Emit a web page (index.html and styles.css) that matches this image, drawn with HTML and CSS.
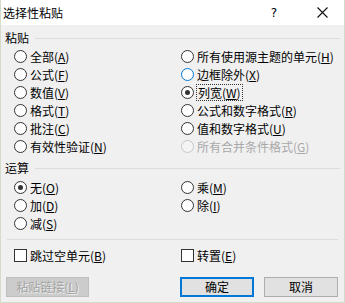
FILE: index.html
```html
<!DOCTYPE html>
<html lang="zh-CN">
<head>
    <meta charset="UTF-8">
    <title>选择性粘贴</title>
    <link rel="stylesheet" href="styles.css">
</head>
<body>
<div class="dialog">
    <div class="titlebar">
        <span class="title">选择性粘贴</span>
        <span class="help">?</span>
        <span class="close">
            <svg width="11" height="11" viewBox="0 0 11 11"><path d="M0.5 0.5 L10.5 10.5 M10.5 0.5 L0.5 10.5" stroke="#111" stroke-width="1.1" fill="none"/></svg>
        </span>
    </div>

    <div class="content">
        <div class="group-label">粘贴</div>
        <div class="options">
            <label class="opt"><span class="radio"></span>全部(<u>A</u>)</label>
            <label class="opt"><span class="radio"></span>所有使用源主题的单元(<u>H</u>)</label>
            <label class="opt"><span class="radio"></span>公式(<u>F</u>)</label>
            <label class="opt"><span class="radio hover"></span>边框除外(<u>X</u>)</label>
            <label class="opt"><span class="radio"></span>数值(<u>V</u>)</label>
            <label class="opt"><span class="radio checked"></span><span class="focus">列宽(<u>W</u>)</span></label>
            <label class="opt"><span class="radio"></span>格式(<u>T</u>)</label>
            <label class="opt"><span class="radio"></span>公式和数字格式(<u>R</u>)</label>
            <label class="opt"><span class="radio"></span>批注(<u>C</u>)</label>
            <label class="opt"><span class="radio"></span>值和数字格式(<u>U</u>)</label>
            <label class="opt"><span class="radio"></span>有效性验证(<u>N</u>)</label>
            <label class="opt disabled"><span class="radio"></span>所有合并条件格式(<u>G</u>)</label>
        </div>

        <div class="group-label second">运算</div>
        <div class="options ops">
            <label class="opt"><span class="radio checked"></span>无(<u>O</u>)</label>
            <label class="opt"><span class="radio"></span>乘(<u>M</u>)</label>
            <label class="opt"><span class="radio"></span>加(<u>D</u>)</label>
            <label class="opt"><span class="radio"></span>除(<u>I</u>)</label>
            <label class="opt"><span class="radio"></span>减(<u>S</u>)</label>
        </div>

        <div class="separator"></div>

        <div class="options checks">
            <label class="opt"><span class="check"></span>跳过空单元(<u>B</u>)</label>
            <label class="opt"><span class="check"></span>转置(<u>E</u>)</label>
        </div>

        <div class="buttons">
            <button class="btn link" disabled>粘贴链接(<u>L</u>)</button>
            <button class="btn ok">确定</button>
            <button class="btn">取消</button>
        </div>
    </div>
</div>
</body>
</html>
```

FILE: styles.css
```css
body {
    margin: 0;
    padding: 0;
    font-family: "Noto Sans CJK SC", "Microsoft YaHei", sans-serif;
    font-size: 12px;
    color: #000;
    background: #f0f0f0;
}

.dialog {
    width: 345px;
    height: 303px;
    box-sizing: border-box;
    background-color: #f0f0f0;
    border: 1px solid #d3dcc9;
    border-top: none;
}

.titlebar {
    height: 25px;
    background-color: #ffffff;
    display: flex;
    align-items: center;
    padding-left: 2px;
}

.title {
    flex: 1;
    font-size: 12px;
}

.help {
    font-family: "DejaVu Sans", sans-serif;
    font-size: 12px;
    margin-right: 40px;
}

.close {
    display: flex;
    margin-right: 16px;
}

.content {
    padding: 4px 4px 0 4px;
}

.group-label {
    height: 18px;
    line-height: 18px;
    display: flex;
    align-items: center;
}

.group-label::after {
    content: "";
    flex: 1;
    border-top: 1px solid #dcdcdc;
    margin-left: 6px;
}

.group-label.second {
    margin-top: 4px;
}

.options {
    display: grid;
    grid-template-columns: 167px 1fr;
    padding-left: 9px;
}

.options.ops {
    margin-top: 1px;
}

.opt {
    height: 18px;
    display: flex;
    align-items: center;
    white-space: nowrap;
}

.opt u {
    text-underline-offset: 1px;
}

.opt.disabled {
    color: #a8a8a8;
}

.radio {
    width: 13px;
    height: 13px;
    box-sizing: border-box;
    border: 1px solid #333;
    border-radius: 50%;
    background: #fff;
    margin-right: 3px;
    position: relative;
    flex-shrink: 0;
}

.radio.hover {
    border-color: #0078d7;
}

.disabled .radio {
    border-color: #c6c6c6;
    background: #f4f4f4;
}

.radio.checked::after {
    content: "";
    position: absolute;
    left: 3px;
    top: 3px;
    width: 5px;
    height: 5px;
    border-radius: 50%;
    background: #333;
}

.focus {
    outline: 1px dotted #333;
    outline-offset: 0;
    padding: 0 1px;
    line-height: 15px;
}

.separator {
    border-top: 1px solid #dcdcdc;
    margin: 7px 2px 0 2px;
}

.checks {
    margin-top: 6px;
}

.check {
    width: 13px;
    height: 13px;
    box-sizing: border-box;
    border: 1px solid #333;
    background: #fff;
    margin-right: 3px;
    flex-shrink: 0;
}

.buttons {
    display: flex;
    margin-top: 13px;
    padding-left: 1px;
    padding-right: 2px;
}

.btn {
    height: 20px;
    width: 74px;
    box-sizing: border-box;
    font-family: inherit;
    font-size: 12px;
    background-color: #e1e1e1;
    border: 1px solid #adadad;
    padding: 0;
    line-height: 16px;
    color: #000;
}

.btn.link {
    width: 83px;
    background-color: #cccccc;
    border-color: #bfbfbf;
    color: #a3a3a3;
    text-shadow: 1px 1px 0 #eeeeee;
}

.btn.ok {
    margin-left: auto;
    margin-right: 10px;
    border: 2px solid #0078d7;
}
```
